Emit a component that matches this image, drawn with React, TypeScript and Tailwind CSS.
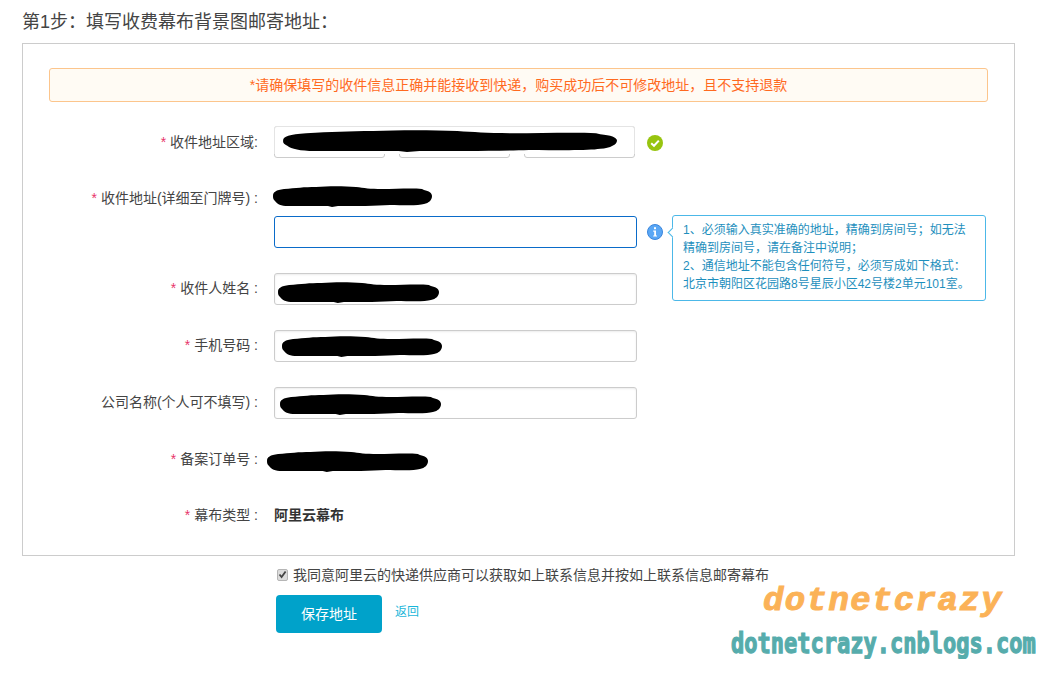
import React from "react";

const FONT = "font-['Liberation_Sans','Noto_Sans_CJK_SC',sans-serif]";

// black marker strokes that hide the personal data in the form
const Scribble = ({ className }: { className: string }) => (
  <svg className={`absolute ${className}`} viewBox="0 0 160 21" preserveAspectRatio="none">
    <path
      fill="#000"
      d="M1 10C1 6 4 4 12 3C24 2 32 1 44 1C56 0 72 0 84 1C92 2 98 3 110 3C124 3 140 2 150 3L152 4C157 5 160 7 160 10C160 14 157 17 152 18C146 20 130 19 118 19C104 20 84 20 66 20L60 21L56 20C44 20 28 20 16 20C9 20 5 18 3 15C1 13 1 12 1 10Z"
    />
  </svg>
);

const Label = ({ required = true, text, className = "" }: { required?: boolean; text: string; className?: string }) => (
  <label className={`w-[209px] shrink-0 text-right text-sm leading-5 text-[#444] ${className}`}>
    {required && <span className="mr-1 text-[#e8336b]">*</span>}
    {text}
  </label>
);

const Field = ({ scribble }: { scribble: string }) => (
  <div className="relative h-8 w-[363px] shrink-0 rounded-[3px] border border-[#ccc] bg-white shadow-[inset_0_1px_2px_rgba(0,0,0,0.08)]">
    <Scribble className={scribble} />
  </div>
);

const CheckIcon = () => (
  <svg className="h-4 w-4" viewBox="0 0 16 16">
    <circle cx="8" cy="8" r="8" fill="#97c40f" />
    <path d="M4.2 8.2L7 10.8L11.8 5.6" fill="none" stroke="#fff" strokeWidth="2" />
  </svg>
);

const InfoIcon = () => (
  <svg className="h-4 w-4" viewBox="0 0 16 16">
    <circle cx="8" cy="8" r="7.5" fill="#5aa7f5" stroke="#3b86dc" />
    <rect x="7" y="3.2" width="2" height="2" fill="#fff" />
    <path d="M6.2 6.6H9V11.4H10V12.6H6.2V11.4H7.2V7.8H6.2Z" fill="#fff" />
  </svg>
);

const App = () => {
  return (
    <div className={`relative h-[674px] w-[1039px] overflow-hidden bg-white ${FONT}`}>
      <h2 className="pl-[22px] pt-[10px] text-lg leading-6 font-normal text-[#444]">
        {"第1步\uFF1A填写收费幕布背景图邮寄地址\uFF1A"}
      </h2>

      <div className="ml-[22px] mt-[9px] h-[513px] w-[993px] border border-[#ccc] px-[26px] pt-6">
        <div className="flex h-[34px] w-[939px] items-center justify-center rounded-[3px] border border-[#fcc58c] bg-[#fffbf4] text-sm text-[#ff6a1f]">
          {"*请确保填写的收件信息正确并能接收到快递\uFF0C购买成功后不可修改地址\uFF0C且不支持退款"}
        </div>

        <div className="mt-6 flex items-center gap-4">
          <Label text="收件地址区域:" />
          <div className="relative flex h-8 w-[361px] shrink-0 gap-[14px]">
            <div className="h-8 w-[111px] rounded-[3px] border border-[#ccc]" />
            <div className="h-8 w-[111px] rounded-[3px] border border-[#ccc]" />
            <div className="h-8 w-[111px] rounded-[3px] border border-[#ccc]" />
            <div className="absolute left-0 top-0 h-7 w-full rounded-t-[3px] border border-b-0 border-[#e4e4e4] bg-white" />
            <Scribble className="left-[7px] top-[4px] h-[22px] w-[336px]" />
          </div>
          <div className="-ml-1 pt-[2px]">
            <CheckIcon />
          </div>
        </div>

        <div className="mt-[30px] flex items-center gap-4">
          <Label text="收件地址(详细至门牌号) :" />
          <div className="relative h-5 w-[363px]">
            <Scribble className="-left-[2px] -top-[2px] h-[21px] w-[160px]" />
          </div>
        </div>

        <div className="relative mt-2 flex items-start gap-[10px] pl-[225px]">
          <div className="h-8 w-[363px] shrink-0 rounded-[3px] border border-[#0a6bc9] bg-white" />
          <div className="pt-2">
            <InfoIcon />
          </div>
          <div className="absolute left-[623px] -top-[1px] h-[86px] w-[314px] rounded-[3px] border border-[#4cb8e8] bg-white px-[10px] pt-[5px] text-xs leading-[18px] whitespace-nowrap text-[#1e8fbd]">
            <span className="absolute -left-[4px] top-[13px] h-[7px] w-[7px] rotate-45 border-b border-l border-[#4cb8e8] bg-white" />
            {"1、必须输入真实准确的地址\uFF0C精确到房间号\uFF1B如无法"}
            <br />
            {"精确到房间号\uFF0C请在备注中说明\uFF1B"}
            <br />
            {"2、通信地址不能包含任何符号\uFF0C必须写成如下格式\uFF1A"}
            <br />
            北京市朝阳区花园路8号星辰小区42号楼2单元101室。
          </div>
        </div>

        <div className="mt-[25px] flex items-center gap-4">
          <Label text="收件人姓名 :" className="mb-[2px]" />
          <Field scribble="left-[2px] top-[8px] h-[21px] w-[162px]" />
        </div>

        <div className="mt-[25px] flex items-center gap-4">
          <Label text="手机号码 :" className="mb-[3px]" />
          <Field scribble="left-[6px] top-[5px] h-[21px] w-[161px]" />
        </div>

        <div className="mt-[25px] flex items-center gap-4">
          <Label text="公司名称(个人可不填写) :" required={false} className="mb-[2px]" />
          <Field scribble="left-[4px] top-[6px] h-[21px] w-[162px]" />
        </div>

        <div className="mt-[30px] flex items-center gap-4">
          <Label text="备案订单号 :" />
          <div className="relative h-5 w-[363px]">
            <Scribble className="-left-[8px] top-[2px] h-[21px] w-[162px]" />
          </div>
        </div>

        <div className="mt-9 flex items-center gap-4">
          <Label text="幕布类型 :" />
          <span className="text-sm leading-5 font-bold text-[#333]">阿里云幕布</span>
        </div>
      </div>

      <div className="ml-[277px] mt-[9px] flex items-center gap-[5px] text-sm leading-5 text-[#444]">
        <span className="relative flex h-[12px] w-[11px]">
          <input
            type="checkbox"
            defaultChecked
            className="h-[12px] w-[11px] appearance-none rounded-[2px] border border-[#b5b5b5] bg-[#dcdcdc]"
          />
          <svg className="absolute left-[1px] top-[1px] h-[9px] w-[9px]" viewBox="0 0 9 9">
            <path d="M1.5 4.5L3.6 7L7.6 1.5" fill="none" stroke="#444" strokeWidth="1.8" />
          </svg>
        </span>
        我同意阿里云的快递供应商可以获取如上联系信息并按如上联系信息邮寄幕布
      </div>

      <div className="ml-[276px] mt-[10px] flex items-start gap-[13px]">
        <button className="h-[38px] w-[106px] rounded-[4px] bg-[#00a2ca] text-sm font-normal text-white">
          保存地址
        </button>
        <a className="mt-[7px] text-xs leading-5 text-[#1ab6d9]">返回</a>
      </div>

      {/* blog watermark on top of the screenshot */}
      <div className="absolute left-[763px] top-[581px] font-['Liberation_Mono'] text-[34px] leading-10 font-bold italic tracking-[1.4px] text-[#fbb257] [-webkit-text-stroke:1px_#fbb257]">
        dotnetcrazy
      </div>
      <div className="absolute left-[731px] top-[629px] origin-top scale-y-[1.25] font-['DejaVu_Sans_Mono'] text-[22px] leading-6 font-bold text-[#56acac] [-webkit-text-stroke:1px_#56acac]">
        dotnetcrazy.cnblogs.com
      </div>
    </div>
  );
};

export default App;
